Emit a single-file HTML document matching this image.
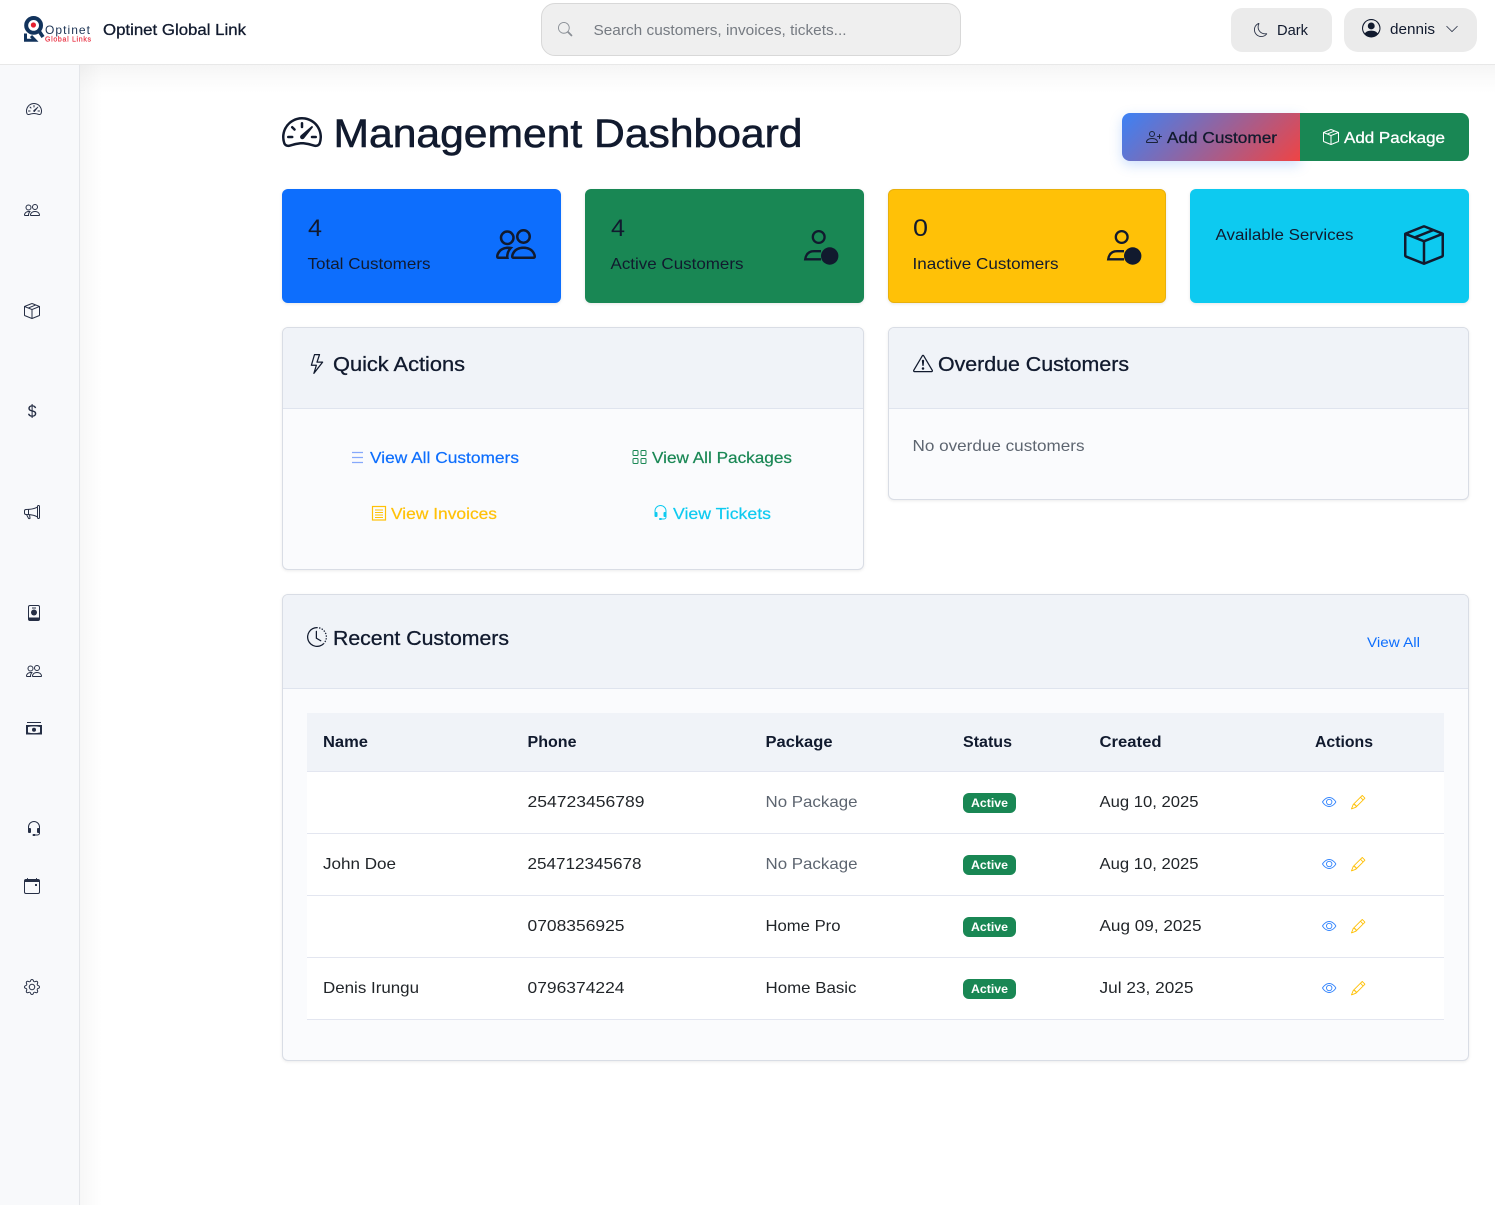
<!DOCTYPE html>
<html lang="en"><head><meta charset="utf-8"><title>Optinet Global Link - Management Dashboard</title>
<style>
html,body{margin:0;padding:0;width:1495px;height:1205px;overflow:hidden;background:#fff}
body{position:relative;font-family:"Liberation Sans",sans-serif}
.b{position:absolute;box-sizing:border-box}
svg.o{position:absolute;left:0;top:0}
svg text{font-family:"Liberation Sans",sans-serif;fill:#111a2e}
.m{stroke:#111a2e;stroke-width:.3}
.s{font-size:16px}
.t{font-size:16px;fill:#212529}
.g{fill:#5d6570}
.h{font-size:16px;font-weight:700;fill:#111a2e}
.card{border:1px solid #d9dde5;border-radius:6px;background:#fafbfd;box-shadow:0 1px 3px rgba(0,0,0,.08);overflow:hidden}
.ch{position:absolute;left:0;top:0;right:0;box-sizing:border-box;background:#f0f3f8;border-bottom:1px solid #dfe4ee}
.stat{border-radius:6px;box-shadow:0 1px 3px rgba(0,0,0,.1)}
.badge{position:absolute;left:963px;width:53px;height:20px;background:#198754;border-radius:6px}
.row{position:absolute;box-sizing:border-box;left:307px;width:1137px;height:62px;background:#fff;border-bottom:1px solid #e3e6f0}
</style></head><body>
<div class="b" style="left:80px;top:65px;width:1415px;height:1140px;overflow:hidden;background:linear-gradient(180deg,#f5f5f5 0,#fbfbfb 14px,#fff 28px)"><div style="position:absolute;left:0;top:0;width:22px;height:1140px;background:linear-gradient(90deg,rgba(0,0,0,.03),rgba(0,0,0,0))"></div></div>
<div class="b" style="left:0;top:65px;width:80px;height:1140px;background:#f8f9fb;border-right:1px solid #e4e6ea"></div>
<div class="b" style="left:0;top:0;width:1495px;height:65px;background:#fff;border-bottom:1px solid #e8e8e8"></div>
<div class="b" style="left:541px;top:3px;width:420px;height:53px;background:#efefef;border:1px solid #d8d8d8;border-radius:14px"></div>
<div class="b" style="left:1231px;top:8px;width:101px;height:44px;background:#ebebeb;border-radius:11px"></div>
<div class="b" style="left:1344px;top:8px;width:133px;height:44px;background:#ebebeb;border-radius:14px"></div>
<div class="b" style="left:1122px;top:113px;width:178px;height:48px;background:linear-gradient(135deg,#3b82f6,#ef4444);border-radius:8px 0 0 8px;box-shadow:0 4px 12px rgba(59,130,246,.25)"></div>
<div class="b" style="left:1300px;top:113px;width:169px;height:48px;background:#198754;border-radius:0 8px 8px 0"></div>
<div class="b stat" style="left:282px;top:189px;width:279px;height:114px;background:#0d6efd"></div>
<div class="b stat" style="left:585px;top:189px;width:279px;height:114px;background:#198754"></div>
<div class="b stat" style="left:888px;top:189px;width:278px;height:114px;background:#ffc107;border:1px solid #e8b00c"></div>
<div class="b stat" style="left:1190px;top:189px;width:279px;height:114px;background:#0dcaf0"></div>
<div class="b card" style="left:282px;top:327px;width:582px;height:243px"><div class="ch" style="height:81px"></div></div>
<div class="b card" style="left:888px;top:327px;width:581px;height:173px"><div class="ch" style="height:81px"></div></div>
<div class="b card" style="left:282px;top:594px;width:1187px;height:467px"><div class="ch" style="height:94px"></div></div>
<div class="b" style="left:307px;top:713px;width:1137px;height:59px;background:#f0f3f8;border-bottom:1px solid #e3e6f0"></div>
<div class="row" style="top:772px"></div>
<div class="row" style="top:834px"></div>
<div class="row" style="top:896px"></div>
<div class="row" style="top:958px"></div>
<div class="badge" style="top:793px"></div>
<div class="badge" style="top:855px"></div>
<div class="badge" style="top:917px"></div>
<div class="badge" style="top:979px"></div>

<svg class="o" width="1495" height="1205" viewBox="0 0 1495 1205" xmlns="http://www.w3.org/2000/svg">
<defs>
<symbol id="speed" viewBox="0 0 16 16"><path d="M8 4a.5.5 0 0 1 .5.5V6a.5.5 0 0 1-1 0V4.5A.5.5 0 0 1 8 4M3.732 5.732a.5.5 0 0 1 .707 0l.915.914a.5.5 0 1 1-.708.708l-.914-.915a.5.5 0 0 1 0-.707M2 10a.5.5 0 0 1 .5-.5h1.586a.5.5 0 0 1 0 1H2.5A.5.5 0 0 1 2 10m9.5 0a.5.5 0 0 1 .5-.5h1.5a.5.5 0 0 1 0 1H12a.5.5 0 0 1-.5-.5m.754-4.246a.39.39 0 0 0-.527-.02L7.547 9.31a.91.91 0 1 0 1.302 1.258l3.434-4.297a.39.39 0 0 0-.029-.518z"/><path fill-rule="evenodd" d="M0 10a8 8 0 1 1 15.547 2.661c-.442 1.253-1.845 1.602-2.932 1.25C11.309 13.488 9.475 13 8 13c-1.474 0-3.31.488-4.615.911-1.087.352-2.49.003-2.932-1.25A8 8 0 0 1 0 10m8-7a7 7 0 0 0-6.603 9.329c.203.575.923.876 1.68.63C4.397 12.533 6.358 12 8 12s3.604.532 4.923.96c.757.245 1.477-.056 1.68-.631A7 7 0 0 0 8 3"/></symbol>
<symbol id="people" viewBox="0 0 16 16"><path d="M15 14s1 0 1-1-1-4-5-4-5 3-5 4 1 1 1 1zm-7.978-1L7 12.996c.001-.264.167-1.03.76-1.72C8.312 10.629 9.282 10 11 10c1.717 0 2.687.63 3.24 1.276.593.69.758 1.457.76 1.72l-.008.002-.014.002zM11 7a2 2 0 1 0 0-4 2 2 0 0 0 0 4m3-2a3 3 0 1 1-6 0 3 3 0 0 1 6 0M6.936 9.28a6 6 0 0 0-1.23-.247A7 7 0 0 0 5 9c-4 0-5 3-5 4q0 1 1 1h4.216A2.24 2.24 0 0 1 5 13c0-1.01.377-2.042 1.09-2.904.243-.294.526-.569.846-.816M4.92 10A5.5 5.5 0 0 0 4 13H1c0-.26.164-1.03.76-1.724.545-.636 1.492-1.256 3.16-1.275ZM1.5 5.5a3 3 0 1 1 6 0 3 3 0 0 1-6 0m3-2a2 2 0 1 0 0 4 2 2 0 0 0 0-4"/></symbol>
<symbol id="box" viewBox="0 0 16 16"><path d="M8.186 1.113a.5.5 0 0 0-.372 0L1.846 3.5l2.404.961L10.404 2zm3.564 1.426L5.596 5 8 5.961 14.154 3.5zm3.25 1.7-6.5 2.6v7.922l6.5-2.6V4.24zM7.5 14.762V6.838L1 4.239v7.925zM7.443.184a1.5 1.5 0 0 1 1.114 0l7.129 2.852A.5.5 0 0 1 16 3.5v8.662a1 1 0 0 1-.629.928l-7.185 2.874a.5.5 0 0 1-.372 0L.63 13.09a1 1 0 0 1-.63-.928V3.5a.5.5 0 0 1 .314-.464z"/></symbol>
<symbol id="dollar" viewBox="0 0 16 16"><path d="M4 10.781c.148 1.667 1.513 2.85 3.591 3.003V15h1.043v-1.216c2.27-.179 3.678-1.438 3.678-3.3 0-1.59-.947-2.51-2.956-3.028l-.722-.187V3.467c1.122.11 1.879.714 2.07 1.616h1.47c-.166-1.6-1.54-2.748-3.54-2.875V1H7.591v1.233c-1.939.23-3.27 1.472-3.27 3.156 0 1.454.966 2.483 2.661 2.917l.61.162v4.031c-1.149-.17-1.94-.8-2.131-1.718zm3.391-3.836c-1.043-.263-1.6-.825-1.6-1.616 0-.944.704-1.641 1.8-1.828v3.495l-.2-.05zm1.591 1.872c1.287.323 1.852.859 1.852 1.769 0 1.097-.826 1.828-2.2 1.939V8.73z"/></symbol>
<symbol id="mega" viewBox="0 0 16 16"><path d="M13 2.5a1.5 1.5 0 0 1 3 0v11a1.5 1.5 0 0 1-3 0v-.214c-2.162-1.241-4.49-1.843-6.912-2.083l.405 2.712A1 1 0 0 1 5.51 15.1h-.548a1 1 0 0 1-.916-.599l-1.85-3.49-.202-.003A2.014 2.014 0 0 1 0 9V7a2.02 2.02 0 0 1 1.992-2.013 75 75 0 0 0 2.483-.075c3.043-.154 6.148-.849 8.525-2.199zm1 0v11a.5.5 0 0 0 1 0v-11a.5.5 0 0 0-1 0m-1 1.35c-2.344 1.205-5.209 1.842-8 2.033v4.233q.27.015.537.036c2.568.189 5.093.744 7.463 1.993zm-9 6.215v-4.13a95 95 0 0 1-1.992.052A1.02 1.02 0 0 0 1 7v2c0 .55.448 1.002 1.006 1.009A61 61 0 0 1 4 10.065m-.657.975 1.609 3.037.01.024h.548l-.002-.014-.443-2.966a68 68 0 0 0-1.722-.082z"/></symbol>
<symbol id="pplus" viewBox="0 0 16 16"><path d="M6 8a3 3 0 1 0 0-6 3 3 0 0 0 0 6m2-3a2 2 0 1 1-4 0 2 2 0 0 1 4 0m4 8c0 1-1 1-1 1H1s-1 0-1-1 1-4 6-4 6 3 6 4m-1-.004c-.001-.246-.154-.986-.832-1.664C9.516 10.68 8.289 10 6 10s-3.516.68-4.168 1.332c-.678.678-.83 1.418-.832 1.664z"/><path fill-rule="evenodd" d="M13.5 5a.5.5 0 0 1 .5.5V7h1.5a.5.5 0 0 1 0 1H14v1.5a.5.5 0 0 1-1 0V8h-1.5a.5.5 0 0 1 0-1H13V5.5a.5.5 0 0 1 .5-.5"/></symbol>
<symbol id="moon" viewBox="0 0 16 16"><path d="M6 .278a.77.77 0 0 1 .08.858 7.2 7.2 0 0 0-.878 3.46c0 4.021 3.278 7.277 7.318 7.277q.792-.001 1.533-.16a.79.79 0 0 1 .81.316.73.73 0 0 1-.031.893A8.35 8.35 0 0 1 8.344 16C3.734 16 0 12.286 0 7.71 0 4.266 2.114 1.312 5.124.06A.75.75 0 0 1 6 .278M4.858 1.311A7.27 7.27 0 0 0 1.025 7.71c0 4.02 3.279 7.276 7.319 7.276a7.32 7.32 0 0 0 5.205-2.162q-.506.063-1.029.063c-4.61 0-8.343-3.714-8.343-8.29 0-1.167.242-2.278.681-3.286"/></symbol>
<symbol id="pcircle" viewBox="0 0 16 16"><path d="M11 6a3 3 0 1 1-6 0 3 3 0 0 1 6 0"/><path fill-rule="evenodd" d="M0 8a8 8 0 1 1 16 0A8 8 0 0 1 0 8m8-7a7 7 0 0 0-5.468 11.37C3.242 11.226 4.805 10 8 10s4.757 1.225 5.468 2.37A7 7 0 0 0 8 1"/></symbol>
<symbol id="chev" viewBox="0 0 16 16"><path fill-rule="evenodd" d="M1.646 4.646a.5.5 0 0 1 .708 0L8 10.293l5.646-5.647a.5.5 0 0 1 .708.708l-6 6a.5.5 0 0 1-.708 0l-6-6a.5.5 0 0 1 0-.708"/></symbol>
<symbol id="search" viewBox="0 0 16 16"><path d="M11.742 10.344a6.5 6.5 0 1 0-1.397 1.398h-.001q.044.06.098.115l3.85 3.85a1 1 0 0 0 1.415-1.414l-3.85-3.85a1 1 0 0 0-.115-.1zM12 6.5a5.5 5.5 0 1 1-11 0 5.5 5.5 0 0 1 11 0"/></symbol>
<symbol id="bolt" viewBox="0 0 16 16"><path d="M5.52.359A.5.5 0 0 1 6 0h4a.5.5 0 0 1 .474.658L8.694 6H12.5a.5.5 0 0 1 .395.807l-7 9a.5.5 0 0 1-.873-.454L6.823 9.5H3.5a.5.5 0 0 1-.48-.641zM6.374 1 4.168 8.5H7.5a.5.5 0 0 1 .478.647L6.78 13.04 11.478 7H8a.5.5 0 0 1-.474-.658L9.306 1z"/></symbol>
<symbol id="warn" viewBox="0 0 16 16"><path d="M7.938 2.016A.13.13 0 0 1 8.002 2a.13.13 0 0 1 .063.016.15.15 0 0 1 .054.057l6.857 11.667c.036.06.035.124.002.183a.2.2 0 0 1-.054.06.1.1 0 0 1-.066.017H1.146a.1.1 0 0 1-.066-.017.2.2 0 0 1-.054-.06.18.18 0 0 1 .002-.183L7.884 2.073a.15.15 0 0 1 .054-.057m1.044-.45a1.13 1.13 0 0 0-1.96 0L.165 13.233c-.457.778.091 1.767.98 1.767h13.713c.889 0 1.438-.99.98-1.767z"/><path d="M7.002 12a1 1 0 1 1 2 0 1 1 0 0 1-2 0M7.1 5.995a.905.905 0 1 1 1.8 0l-.35 3.507a.552.552 0 0 1-1.1 0z"/></symbol>
<symbol id="grid" viewBox="0 0 16 16"><path d="M1 2.5A1.5 1.5 0 0 1 2.5 1h3A1.5 1.5 0 0 1 7 2.5v3A1.5 1.5 0 0 1 5.5 7h-3A1.5 1.5 0 0 1 1 5.5zM2.5 2a.5.5 0 0 0-.5.5v3a.5.5 0 0 0 .5.5h3a.5.5 0 0 0 .5-.5v-3a.5.5 0 0 0-.5-.5zm6.5.5A1.5 1.5 0 0 1 10.5 1h3A1.5 1.5 0 0 1 15 2.5v3A1.5 1.5 0 0 1 13.5 7h-3A1.5 1.5 0 0 1 9 5.5zm1.5-.5a.5.5 0 0 0-.5.5v3a.5.5 0 0 0 .5.5h3a.5.5 0 0 0 .5-.5v-3a.5.5 0 0 0-.5-.5zM1 10.5A1.5 1.5 0 0 1 2.5 9h3A1.5 1.5 0 0 1 7 10.5v3A1.5 1.5 0 0 1 5.5 15h-3A1.5 1.5 0 0 1 1 13.5zm1.5-.5a.5.5 0 0 0-.5.5v3a.5.5 0 0 0 .5.5h3a.5.5 0 0 0 .5-.5v-3a.5.5 0 0 0-.5-.5zm6.5.5A1.5 1.5 0 0 1 10.5 9h3a1.5 1.5 0 0 1 1.5 1.5v3a1.5 1.5 0 0 1-1.5 1.5h-3A1.5 1.5 0 0 1 9 13.5zm1.5-.5a.5.5 0 0 0-.5.5v3a.5.5 0 0 0 .5.5h3a.5.5 0 0 0 .5-.5v-3a.5.5 0 0 0-.5-.5z"/></symbol>
<symbol id="headset" viewBox="0 0 16 16"><path d="M8 1a5 5 0 0 0-5 5v1h1a1 1 0 0 1 1 1v3a1 1 0 0 1-1 1H3a1 1 0 0 1-1-1V6a6 6 0 1 1 12 0v6a2.5 2.5 0 0 1-2.5 2.5H9.366a1 1 0 0 1-.866.5h-1a1 1 0 1 1 0-2h1a1 1 0 0 1 .866.5H11.5A1.5 1.5 0 0 0 13 12h-1a1 1 0 0 1-1-1V8a1 1 0 0 1 1-1h1V6a5 5 0 0 0-5-5"/></symbol>
<symbol id="clock" viewBox="0 0 16 16"><path d="M8.515 1.019A7 7 0 0 0 8 1V0a8 8 0 0 1 .589.022zm2.004.45a7 7 0 0 0-.985-.299l.219-.976q.576.129 1.126.342zm1.37.71a7 7 0 0 0-.439-.27l.493-.87a8 8 0 0 1 .979.654l-.615.789a7 7 0 0 0-.418-.302zm1.834 1.79a7 7 0 0 0-.653-.796l.724-.69q.406.429.747.91zm.744 1.352a7 7 0 0 0-.214-.468l.893-.45a8 8 0 0 1 .45 1.088l-.95.313a7 7 0 0 0-.179-.483m.53 2.507a7 7 0 0 0-.1-1.025l.985-.17q.1.58.116 1.17zm-.131 1.538q.05-.254.081-.51l.993.123a8 8 0 0 1-.23 1.155l-.964-.267q.069-.247.12-.501m-.952 2.379q.276-.436.486-.908l.914.405q-.24.54-.555 1.038zm-.964 1.205q.183-.183.35-.378l.758.653a8 8 0 0 1-.401.432z"/><path d="M8 1a7 7 0 1 0 4.95 11.95l.707.707A8.001 8.001 0 1 1 8 0z"/><path d="M7.5 3a.5.5 0 0 1 .5.5v5.21l3.248 1.856a.5.5 0 0 1-.496.868l-3.5-2A.5.5 0 0 1 7 9V3.5a.5.5 0 0 1 .5-.5"/></symbol>
<symbol id="eye" viewBox="0 0 16 16"><path d="M16 8s-3-5.5-8-5.5S0 8 0 8s3 5.5 8 5.5S16 8 16 8M1.173 8a13 13 0 0 1 1.66-2.043C4.12 4.668 5.88 3.5 8 3.5s3.879 1.168 5.168 2.457A13 13 0 0 1 14.828 8q-.086.13-.195.288c-.335.48-.83 1.12-1.465 1.755C11.879 11.332 10.119 12.5 8 12.5s-3.879-1.168-5.168-2.457A13 13 0 0 1 1.172 8z"/><path d="M8 5.5a2.5 2.5 0 1 0 0 5 2.5 2.5 0 0 0 0-5M4.5 8a3.5 3.5 0 1 1 7 0 3.5 3.5 0 0 1-7 0"/></symbol>
<symbol id="pencil" viewBox="0 0 16 16"><path d="M12.146.146a.5.5 0 0 1 .708 0l3 3a.5.5 0 0 1 0 .708l-10 10a.5.5 0 0 1-.168.11l-5 2a.5.5 0 0 1-.65-.65l2-5a.5.5 0 0 1 .11-.168zM11.207 2.5 13.5 4.793 14.793 3.5 12.5 1.207zm1.586 3L10.5 3.207 4 9.707V10h.5a.5.5 0 0 1 .5.5v.5h.5a.5.5 0 0 1 .5.5v.5h.293zm-9.761 5.175-.106.106-1.528 3.821 3.821-1.528.106-.106A.5.5 0 0 1 5 12.5V12h-.5a.5.5 0 0 1-.5-.5V11h-.5a.5.5 0 0 1-.468-.325"/></symbol>
<symbol id="gear" viewBox="0 0 16 16"><path d="M8 4.754a3.246 3.246 0 1 0 0 6.492 3.246 3.246 0 0 0 0-6.492M5.754 8a2.246 2.246 0 1 1 4.492 0 2.246 2.246 0 0 1-4.492 0"/><path d="M9.796 1.343c-.527-1.79-3.065-1.79-3.592 0l-.094.319a.873.873 0 0 1-1.255.52l-.292-.16c-1.64-.892-3.433.902-2.54 2.541l.159.292a.873.873 0 0 1-.52 1.255l-.319.094c-1.79.527-1.79 3.065 0 3.592l.319.094a.873.873 0 0 1 .52 1.255l-.16.292c-.892 1.64.901 3.434 2.541 2.54l.292-.159a.873.873 0 0 1 1.255.52l.094.319c.527 1.79 3.065 1.79 3.592 0l.094-.319a.873.873 0 0 1 1.255-.52l.292.16c1.64.893 3.434-.902 2.54-2.541l-.159-.292a.873.873 0 0 1 .52-1.255l.319-.094c1.79-.527 1.79-3.065 0-3.592l-.319-.094a.873.873 0 0 1-.52-1.255l.16-.292c.893-1.64-.902-3.433-2.541-2.54l-.292.159a.873.873 0 0 1-1.255-.52zm-2.633.283c.246-.835 1.428-.835 1.674 0l.094.319a1.873 1.873 0 0 0 2.693 1.115l.291-.16c.764-.415 1.6.42 1.184 1.185l-.159.292a1.873 1.873 0 0 0 1.116 2.692l.318.094c.835.246.835 1.428 0 1.674l-.319.094a1.873 1.873 0 0 0-1.115 2.693l.16.291c.415.764-.42 1.6-1.185 1.184l-.291-.159a1.873 1.873 0 0 0-2.693 1.116l-.094.318c-.246.835-1.428.835-1.674 0l-.094-.319a1.873 1.873 0 0 0-2.692-1.115l-.292.16c-.764.415-1.6-.42-1.184-1.185l.159-.291A1.873 1.873 0 0 0 1.945 8.93l-.319-.094c-.835-.246-.835-1.428 0-1.674l.319-.094A1.873 1.873 0 0 0 3.06 4.377l-.16-.292c-.415-.764.42-1.6 1.185-1.184l.292.159a1.873 1.873 0 0 0 2.692-1.115z"/></symbol>
<symbol id="cal" viewBox="0 0 16 16"><path d="M3.5 0a.5.5 0 0 1 .5.5V1h8V.5a.5.5 0 0 1 1 0V1h1a2 2 0 0 1 2 2v11a2 2 0 0 1-2 2H2a2 2 0 0 1-2-2V3a2 2 0 0 1 2-2h1V.5a.5.5 0 0 1 .5-.5M1 4v10a1 1 0 0 0 1 1h12a1 1 0 0 0 1-1V4z"/><path d="M1 2h14v2H1z"/><rect x="11" y="6" width="2" height="2" rx=".4"/></symbol>
</defs>

<!-- logo -->
<g fill="none" stroke="#12335c">
<circle cx="33.6" cy="25.4" r="7.4" stroke-width="4"/>
<path d="M39 31 L43 37" stroke-width="3.6"/>
<path d="M25.5 33.5 V40.2 H35 L31 36" stroke-width="3"/>
</g>
<circle cx="33.4" cy="25" r="2.6" fill="#e5202e"/>
<text x="45" y="34" font-size="12" textLength="45" lengthAdjust="spacing" style="fill:#1c3354">Optinet</text>
<text x="45" y="41.5" font-size="7" textLength="46" lengthAdjust="spacing" style="fill:#e8283a;stroke:#e8283a;stroke-width:.15">Global Links</text>
<text x="103" y="35" class="s m" textLength="143" lengthAdjust="spacingAndGlyphs">Optinet Global Link</text>

<!-- topbar -->
<use href="#search" x="558" y="22" width="14.400" height="14.400" fill="#8a8f96"/>
<text x="593.500" y="35" font-size="14.400" textLength="253" lengthAdjust="spacingAndGlyphs" style="fill:#767b82">Search customers, invoices, tickets...</text>
<use href="#moon" x="1254" y="23" width="14" height="14" fill="#2b3347"/>
<text x="1277" y="35" font-size="14.400" textLength="31" lengthAdjust="spacingAndGlyphs">Dark</text>
<use href="#pcircle" x="1362" y="19" width="18.500" height="18.500" fill="#111a2e"/>
<text x="1390" y="34" font-size="14.400" textLength="45" lengthAdjust="spacingAndGlyphs">dennis</text>
<use href="#chev" x="1445" y="22" width="14" height="14" fill="#2b3347"/>

<!-- sidebar -->
<g fill="#262f45">
<use href="#speed" x="26" y="101" width="16" height="16"/>
<use href="#people" x="24" y="202" width="16" height="16"/>
<use href="#box" x="24" y="303" width="16" height="16"/>
<use href="#dollar" x="24" y="403" width="16" height="16"/>
<use href="#mega" x="24" y="504" width="16" height="16"/>
<rect x="28.500" y="605.500" width="11" height="15" rx="1.500" fill="none" stroke="#262f45"/>
<path d="M32 608h4" stroke="#262f45"/>
<circle cx="34" cy="612.500" r="3"/>
<path d="M28.500 617.500h11V619a1.500 1.500 0 0 1-1.500 1.500h-8a1.500 1.500 0 0 1-1.500-1.500z"/>
<use href="#people" x="26" y="663" width="16" height="16"/>
<path d="M27 722.500h14" stroke="#262f45"/>
<path fill-rule="evenodd" d="M26 725h16v9.500H26zM28 727v5.500q6 1.200 12 0V727q-6-1.200-12 0z"/>
<circle cx="34" cy="729.700" r="2"/>
<use href="#headset" x="26" y="821" width="16" height="16"/>
<use href="#cal" x="24" y="878" width="16" height="16"/>
<use href="#gear" x="24" y="979" width="16" height="16"/>
</g>

<!-- page heading -->
<use href="#speed" x="282" y="112" width="40" height="40" fill="#111a2e"/>
<text x="333.500" y="147" font-size="40" style="stroke:#111a2e;stroke-width:.6" textLength="469" lengthAdjust="spacingAndGlyphs">Management Dashboard</text>
<use href="#pplus" x="1146" y="129" width="16" height="16" fill="#1a2238"/>
<text x="1167" y="143" class="s m" textLength="110" lengthAdjust="spacingAndGlyphs">Add Customer</text>
<use href="#box" x="1323" y="129" width="16" height="16" fill="#fff"/>
<text x="1344" y="143" class="s" textLength="101" lengthAdjust="spacingAndGlyphs" style="fill:#fff;stroke:#fff;stroke-width:.3">Add Package</text>

<!-- stat cards -->
<text x="308" y="236" font-size="24" textLength="14" lengthAdjust="spacingAndGlyphs">4</text>
<text x="307.500" y="269" class="s" textLength="123" lengthAdjust="spacingAndGlyphs">Total Customers</text>
<use href="#people" x="496" y="224" width="40" height="40" fill="#111a2e"/>
<text x="611" y="236" font-size="24" textLength="14" lengthAdjust="spacingAndGlyphs">4</text>
<text x="610.500" y="269" class="s" textLength="133" lengthAdjust="spacingAndGlyphs">Active Customers</text>
<g id="pdot" fill="none" stroke="#111a2e" stroke-width="2.300">
<circle cx="818.700" cy="237" r="5.900"/>
<path d="M821 251.200H814Q806.500 251.200 805.200 259.300H821"/>
<circle cx="829.700" cy="256" r="8.700" fill="#111a2e" stroke="none"/>
</g>
<text x="913" y="236" font-size="24" textLength="15" lengthAdjust="spacingAndGlyphs">0</text>
<text x="912.500" y="269" class="s" textLength="146" lengthAdjust="spacingAndGlyphs">Inactive Customers</text>
<use href="#pdot" x="303"/>
<text x="1215.500" y="240" class="s" textLength="138" lengthAdjust="spacingAndGlyphs">Available Services</text>
<use href="#box" x="1404" y="225" width="40" height="40" fill="#111a2e"/>

<!-- quick actions -->
<use href="#bolt" x="307" y="354" width="20" height="20" fill="#111a2e"/>
<text x="333" y="371" font-size="20" class="m" textLength="132" lengthAdjust="spacingAndGlyphs">Quick Actions</text>
<path d="M352 452.500h11M352 457.500h11M352 462.500h11" stroke="#85a8fb" stroke-width="1.300"/>
<text x="370" y="463" class="s" textLength="149" lengthAdjust="spacingAndGlyphs" style="fill:#0d6efd;stroke:#0d6efd;stroke-width:.2">View All Customers</text>
<use href="#grid" x="631.500" y="449" width="16" height="16" fill="#198754"/>
<text x="652" y="463" class="s" textLength="140" lengthAdjust="spacingAndGlyphs" style="fill:#198754;stroke:#198754;stroke-width:.2">View All Packages</text>
<rect x="372.500" y="506.500" width="13" height="13.500" fill="none" stroke="#ffc107" stroke-width="1.200"/>
<path d="M375 510h8M375 512.500h8M375 515h8M375 517.500h8" stroke="#ffc107"/>
<text x="391" y="519" class="s" textLength="106" lengthAdjust="spacingAndGlyphs" style="fill:#ffc107;stroke:#ffc107;stroke-width:.2">View Invoices</text>
<use href="#headset" x="652.500" y="505" width="16" height="16" fill="#0dcaf0"/>
<text x="673" y="519" class="s" textLength="98" lengthAdjust="spacingAndGlyphs" style="fill:#0dcaf0;stroke:#0dcaf0;stroke-width:.2">View Tickets</text>

<!-- overdue -->
<use href="#warn" x="913" y="353.500" width="20" height="20" fill="#111a2e"/>
<text x="938" y="371" font-size="20" class="m" textLength="191" lengthAdjust="spacingAndGlyphs">Overdue Customers</text>
<text x="912.500" y="451" class="s g" textLength="172" lengthAdjust="spacingAndGlyphs">No overdue customers</text>

<!-- recent -->
<use href="#clock" x="307" y="627" width="20" height="20" fill="#111a2e"/>
<text x="333" y="645" font-size="20" class="m" textLength="176" lengthAdjust="spacingAndGlyphs">Recent Customers</text>
<text x="1367" y="647" font-size="14" textLength="53" lengthAdjust="spacingAndGlyphs" style="fill:#0d6efd">View All</text>

<text x="323" y="747" class="h" textLength="45" lengthAdjust="spacingAndGlyphs">Name</text>
<text x="527.500" y="747" class="h" textLength="49" lengthAdjust="spacingAndGlyphs">Phone</text>
<text x="765.500" y="747" class="h" textLength="67" lengthAdjust="spacingAndGlyphs">Package</text>
<text x="963" y="747" class="h" textLength="49" lengthAdjust="spacingAndGlyphs">Status</text>
<text x="1099.500" y="747" class="h" textLength="62" lengthAdjust="spacingAndGlyphs">Created</text>
<text x="1315" y="747" class="h" textLength="58" lengthAdjust="spacingAndGlyphs">Actions</text>

<text x="527.500" y="807" class="t" textLength="117" lengthAdjust="spacingAndGlyphs">254723456789</text>
<text x="765.500" y="807" class="t g" textLength="92" lengthAdjust="spacingAndGlyphs">No Package</text>
<text x="1099.500" y="807" class="t" textLength="99" lengthAdjust="spacingAndGlyphs">Aug 10, 2025</text>

<text x="323" y="869" class="t" textLength="73" lengthAdjust="spacingAndGlyphs">John Doe</text>
<text x="527.500" y="869" class="t" textLength="114" lengthAdjust="spacingAndGlyphs">254712345678</text>
<text x="765.500" y="869" class="t g" textLength="92" lengthAdjust="spacingAndGlyphs">No Package</text>
<text x="1099.500" y="869" class="t" textLength="99" lengthAdjust="spacingAndGlyphs">Aug 10, 2025</text>

<text x="527.500" y="931" class="t" textLength="97" lengthAdjust="spacingAndGlyphs">0708356925</text>
<text x="765.500" y="931" class="t" textLength="75" lengthAdjust="spacingAndGlyphs">Home Pro</text>
<text x="1099.500" y="931" class="t" textLength="102" lengthAdjust="spacingAndGlyphs">Aug 09, 2025</text>

<text x="323" y="993" class="t" textLength="96" lengthAdjust="spacingAndGlyphs">Denis Irungu</text>
<text x="527.500" y="993" class="t" textLength="97" lengthAdjust="spacingAndGlyphs">0796374224</text>
<text x="765.500" y="993" class="t" textLength="91" lengthAdjust="spacingAndGlyphs">Home Basic</text>
<text x="1099.500" y="993" class="t" textLength="94" lengthAdjust="spacingAndGlyphs">Jul 23, 2025</text>

<g font-size="12" font-weight="700">
<text x="971" y="807" textLength="37" lengthAdjust="spacingAndGlyphs" style="fill:#fff">Active</text>
<text x="971" y="869" textLength="37" lengthAdjust="spacingAndGlyphs" style="fill:#fff">Active</text>
<text x="971" y="931" textLength="37" lengthAdjust="spacingAndGlyphs" style="fill:#fff">Active</text>
<text x="971" y="993" textLength="37" lengthAdjust="spacingAndGlyphs" style="fill:#fff">Active</text>
</g>
<g fill="#0d6efd" opacity=".85">
<use href="#eye" x="1322" y="794.800" width="14.400" height="14.400"/>
<use href="#eye" x="1322" y="856.800" width="14.400" height="14.400"/>
<use href="#eye" x="1322" y="918.800" width="14.400" height="14.400"/>
<use href="#eye" x="1322" y="980.800" width="14.400" height="14.400"/>
</g>
<g fill="#ffc107">
<use href="#pencil" x="1351" y="795" width="14.400" height="14.400"/>
<use href="#pencil" x="1351" y="857" width="14.400" height="14.400"/>
<use href="#pencil" x="1351" y="919" width="14.400" height="14.400"/>
<use href="#pencil" x="1351" y="981" width="14.400" height="14.400"/>
</g>
</svg>
</body></html>
